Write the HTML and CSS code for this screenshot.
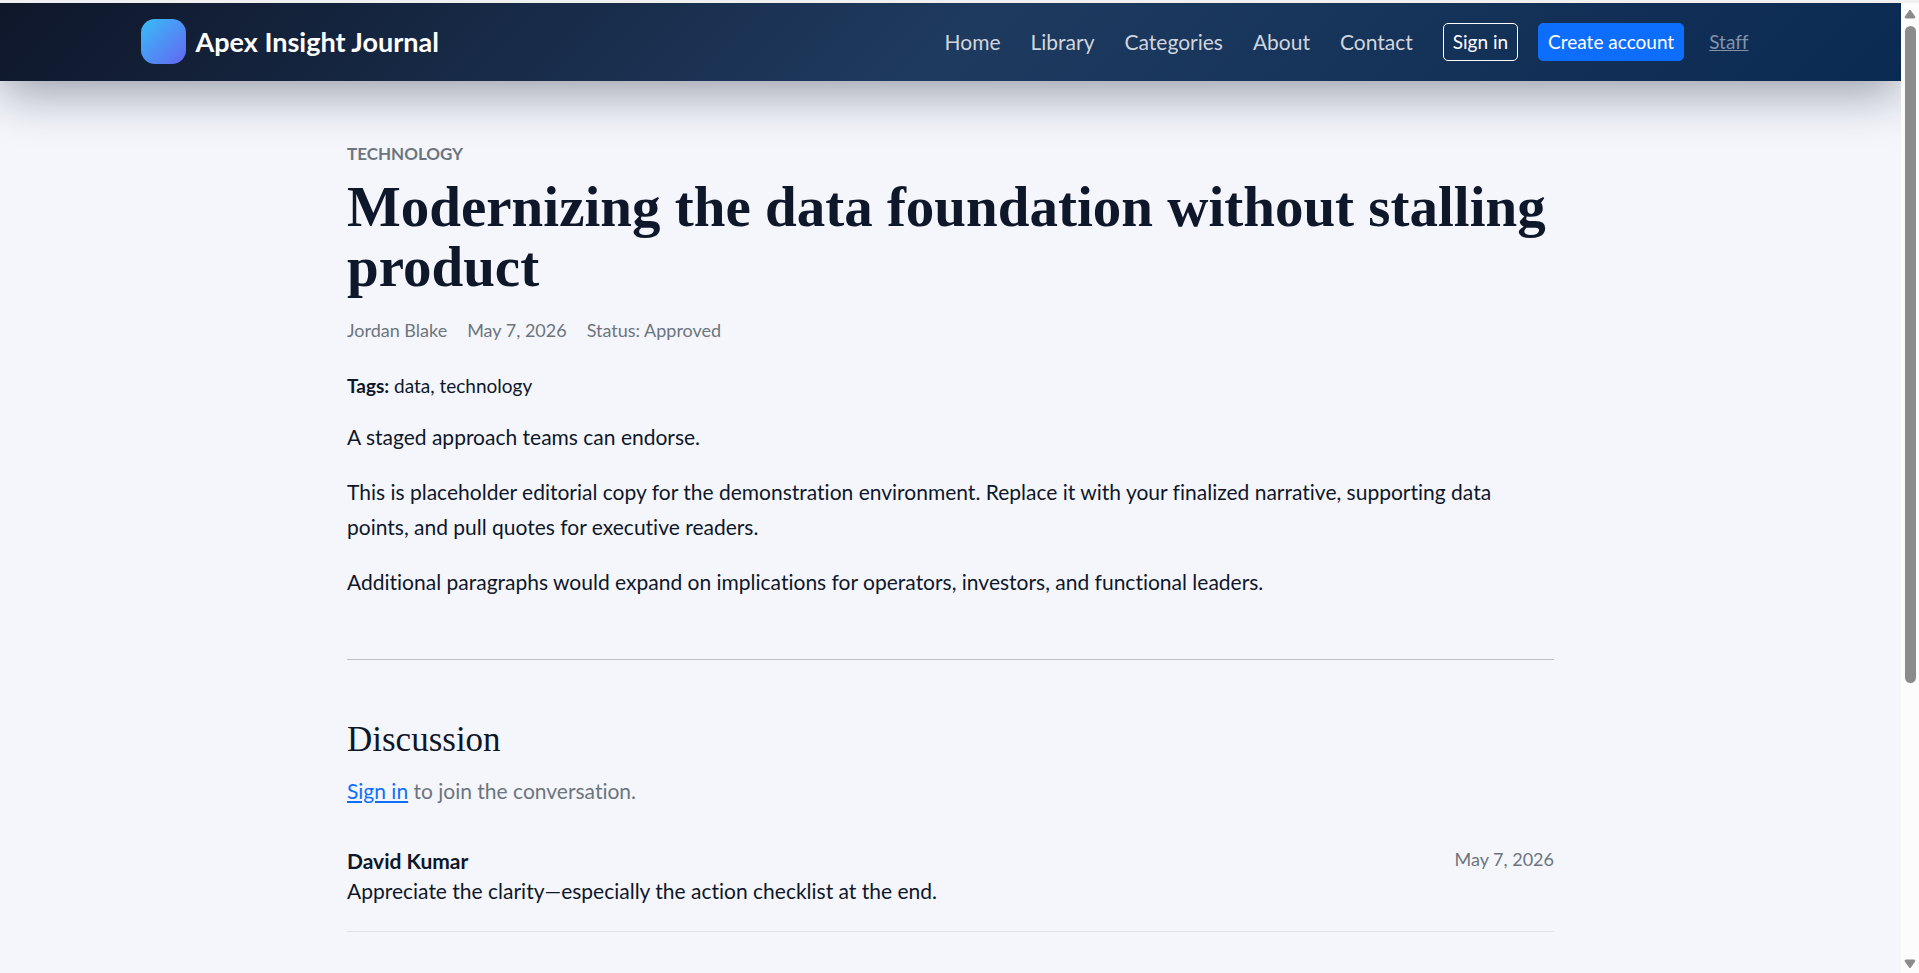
FILE: index.html
```
<!DOCTYPE html>
<html lang="en">
<head>
    <meta charset="UTF-8">
    <meta name="viewport" content="width=device-width, initial-scale=1.0">
    <title>Modernizing the data foundation without stalling product</title>
    <link rel="stylesheet" href="styles.css">
</head>
<body>
    <header class="site-header">
        <div class="container">
            <a class="brand" href="#">
                <span class="brand-mark"></span>
                <span>Apex Insight Journal</span>
            </a>
            <nav class="main-nav">
                <a href="#">Home</a>
                <a href="#">Library</a>
                <a href="#">Categories</a>
                <a href="#">About</a>
                <a href="#">Contact</a>
            </nav>
            <div class="actions">
                <button type="button" class="btn btn-outline">Sign in</button>
                <button type="button" class="btn btn-primary">Create account</button>
                <a class="staff-link" href="#">Staff</a>
            </div>
        </div>
    </header>

    <main class="article">
        <p class="category">Technology</p>
        <h1>Modernizing the data foundation without stalling product</h1>
        <div class="meta">
            <span>Jordan Blake</span>
            <span>May 7, 2026</span>
            <span>Status: Approved</span>
        </div>
        <p class="tags"><strong>Tags:</strong> data, technology</p>

        <div class="article-body">
            <p>A staged approach teams can endorse.</p>
            <p>This is placeholder editorial copy for the demonstration environment. Replace it with your finalized narrative, supporting data points, and pull quotes for executive readers.</p>
            <p>Additional paragraphs would expand on implications for operators, investors, and functional leaders.</p>
        </div>

        <hr>

        <section class="discussion">
            <h2>Discussion</h2>
            <p class="join"><a href="#">Sign in</a> to join the conversation.</p>
            <div class="comment">
                <div class="comment-head">
                    <strong>David Kumar</strong>
                    <span class="comment-date">May 7, 2026</span>
                </div>
                <p>Appreciate the clarity—especially the action checklist at the end.</p>
            </div>
        </section>
    </main>

    <div class="scrollbar" aria-hidden="true">
        <svg width="12" height="10" viewBox="0 0 12 10"><path d="M6 1 L11 8 Q11 9 10 9 H2 Q1 9 1 8 Z" fill="#8b8b8b" stroke="#8b8b8b" stroke-linejoin="round"/></svg>
        <div class="scroll-track"><div class="scroll-thumb"></div></div>
        <svg width="12" height="10" viewBox="0 0 12 10"><path d="M6 9 L11 2 Q11 1 10 1 H2 Q1 1 1 2 Z" fill="#8b8b8b" stroke="#8b8b8b" stroke-linejoin="round"/></svg>
    </div>
</body>
</html>
```
FILE: styles.css
```
* {
    box-sizing: border-box;
}
body {
    margin: 0;
    padding-right: 18px;
    border-top: 3px solid #f0f0f0;
    min-height: 100vh;
    background-color: #f4f6fb;
    color: #0f172a;
    font-family: Lato, "Liberation Sans", sans-serif;
    font-size: 21px;
    line-height: 30px;
    font-variant-ligatures: no-common-ligatures;
}
h1, h2, p {
    margin: 0;
}
h1, h2 {
    font-family: "Liberation Serif", serif;
}
.site-header {
    background: linear-gradient(135deg, #0f172a 0%, #1e3a5f 50%, #0b2a52 100%);
    box-shadow: 0 12px 50px rgba(15, 23, 42, 0.4);
}
.container {
    display: flex;
    align-items: center;
    max-width: 1650px;
    height: 78px;
    margin: 0 auto;
    padding: 0 15px 1px;
}
.brand {
    display: flex;
    align-items: center;
    gap: 10px;
    margin-right: auto;
    color: #fff;
    font-size: 27px;
    font-weight: bold;
    text-decoration: none;
}
.brand-mark {
    width: 45px;
    height: 45px;
    border-radius: 14px;
    background: linear-gradient(135deg, #38bdf8, #6366f1);
}
.main-nav {
    display: flex;
    gap: 30px;
    margin-right: 30px;
}
.main-nav a {
    color: #d0d5dd;
    text-decoration: none;
}
.actions {
    display: flex;
    align-items: center;
    gap: 20px;
}
.btn {
    height: 38px;
    padding: 0 9px;
    border: 1px solid #fff;
    border-radius: 5px;
    color: #fff;
    font-family: inherit;
    font-size: 19px;
}
.btn-outline {
    background: transparent;
}
.btn-primary {
    background: #0d6efd;
    border-color: #0d6efd;
}
.staff-link {
    margin: 0 12px 0 5px;
    color: #8493a9;
    font-size: 19px;
}
.article {
    max-width: 1207px;
    margin: 0 auto;
    padding: 60px 0;
}
.category {
    color: #6c757d;
    font-size: 17px;
    line-height: 26px;
    font-weight: bold;
    text-transform: uppercase;
}
h1 {
    margin-top: 10px;
    font-size: 57px;
    line-height: 60px;
}
.meta {
    display: flex;
    gap: 20px;
    margin-top: 20px;
    color: #6c757d;
    font-size: 18px;
    line-height: 26px;
}
.tags {
    margin-top: 30px;
    font-size: 19px;
    line-height: 26px;
}
.article-body {
    margin-top: 20px;
    line-height: 35px;
}
.article-body p {
    margin-bottom: 20px;
}
hr {
    margin: 60px 0;
    border: 0;
    border-top: 1px solid #bcbfc7;
}
h2 {
    font-size: 35px;
    line-height: 40px;
    font-weight: normal;
}
.join {
    margin-top: 16px;
    color: #6c757d;
}
.join a {
    color: #0d6efd;
}
.comment {
    margin-top: 20px;
    padding: 20px 0 25px;
    border-bottom: 1px solid #dee2e6;
}
.comment-head {
    display: flex;
    justify-content: space-between;
}
.comment-date {
    color: #6c757d;
    font-size: 18px;
    line-height: 26px;
}
/* page scroll indicator */
.scrollbar {
    position: fixed;
    top: 3px;
    right: 0;
    bottom: 0;
    width: 18px;
    padding: 6px 0 4px;
    display: flex;
    flex-direction: column;
    align-items: center;
    gap: 7px;
    background: #fcfcfc;
}
.scroll-track {
    flex: 1;
}
.scroll-thumb {
    width: 11px;
    height: 71%;
    border-radius: 6px;
    background: #8b8b8b;
}
```
